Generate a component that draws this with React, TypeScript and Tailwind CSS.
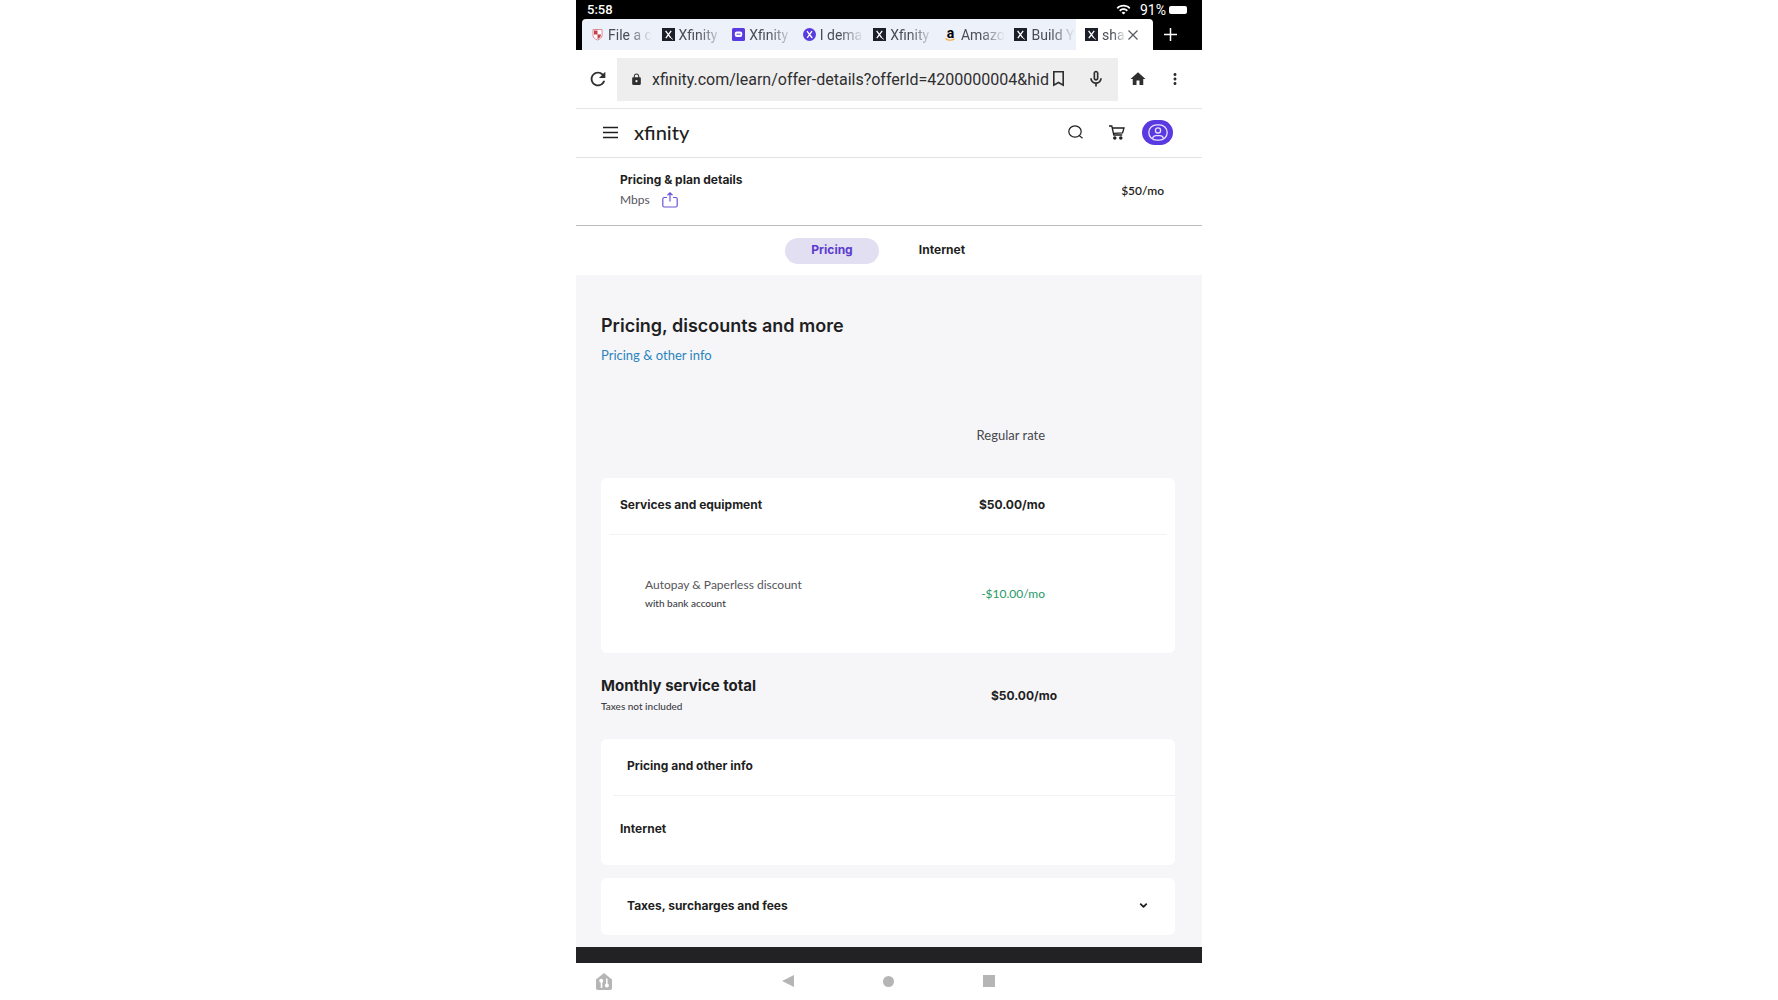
import { useState } from 'react';
import type { ReactNode } from 'react';
import { MdHome, MdLock, MdMoreVert, MdOutlineMicNone, MdRefresh, MdWifi } from 'react-icons/md';
import { ChevronDown } from 'lucide-react';

function XIcon() {
  return (
    <svg viewBox="0 0 13 13" className="size-[13px] shrink-0">
      <rect width="13" height="13" fill="#1c1f2a" />
      <path d="M3.600 2.800 8.800 9.800M9.200 2.800 3.800 10.200" stroke="#fff" strokeWidth="1.300" fill="none" />
      <path d="M8.800 9.800 10.800 11.400" stroke="#fff" strokeWidth=".9" />
    </svg>
  );
}

function ShieldIcon() {
  return (
    <svg viewBox="0 0 13 13" className="size-[13px] shrink-0">
      <path d="M2 1.500h9v6c0 2.200-2 3.500-4.500 4.500C4 11 2 9.700 2 7.500z" fill="#fff" stroke="#d98a92" />
      <path d="M3 2.500h3.500v4H3zM6.500 6.500h3.500c0 2.300-1.300 3.500-3.500 4.400z" fill="#c2404c" />
    </svg>
  );
}

function ChatIcon() {
  return (
    <svg viewBox="0 0 13 13" className="size-[13px] shrink-0">
      <rect width="13" height="13" rx="1.500" fill="#5a3be0" />
      <rect x="2.800" y="3.500" width="7.400" height="5.500" rx="2" fill="#fff" />
      <path d="M4.500 6.200h4" stroke="#5a3be0" />
    </svg>
  );
}

function RoundXIcon() {
  return (
    <svg viewBox="0 0 13 13" className="size-[13px] shrink-0">
      <circle cx="6.500" cy="6.500" r="6.500" fill="#5a3be0" />
      <path d="M4 3.200 9.200 10M9 3.200 4.200 9.800" stroke="#fff" strokeWidth="1.300" />
    </svg>
  );
}

function AmazonIcon() {
  return (
    <span className="flex size-[13px] shrink-0 flex-col items-center justify-center">
      <span className="text-sm leading-[9px] font-bold text-black">a</span>
      <svg viewBox="0 0 10 3" className="h-[3px] w-[10px]">
        <path d="M.5.5C3 2.800 7 2.800 9.500.8" stroke="#f4a938" strokeWidth="1.200" fill="none" />
      </svg>
    </span>
  );
}

const browserTabs: { title: string; icon: ReactNode }[] = [
  { title: 'File a c', icon: <ShieldIcon /> },
  { title: 'Xfinity', icon: <XIcon /> },
  { title: 'Xfinity', icon: <ChatIcon /> },
  { title: 'I dema', icon: <RoundXIcon /> },
  { title: 'Xfinity', icon: <XIcon /> },
  { title: 'Amazo', icon: <AmazonIcon /> },
  { title: 'Build Y', icon: <XIcon /> },
];

const fade = 'overflow-hidden whitespace-nowrap [mask-image:linear-gradient(to_right,black_45%,transparent)]';

function BrowserChrome() {
  return (
    <div className="font-[Roboto,sans-serif]">
      {/* Status bar */}
      <div className="flex h-[19px] items-center bg-black pr-[15px] pl-[11px] text-[13px] leading-4 text-white">
        <span className="flex-1 font-medium">5:58</span>
        <MdWifi className="mr-[9px] size-[15px]" />
        <span className="text-sm leading-4">91%</span>
        <span className="ml-[3px] h-2 w-[18px] rounded-xs bg-white" />
      </div>

      {/* Tab strip */}
      <div className="flex h-[31px] bg-black pl-[6px] text-sm text-[#4a4d55]">
        <div className="flex min-w-0 flex-1 rounded-tl-sm bg-[#edf1fa]">
          {browserTabs.map((tab, i) => (
            <button key={i} className="flex min-w-0 flex-1 items-center gap-1 pl-[9px]">
              {tab.icon}
              <span className={`w-[44px] text-left ${fade}`}>{tab.title}</span>
            </button>
          ))}
        </div>
        <div className="flex w-[77px] items-center rounded-tr-sm bg-white pl-[9px]">
          <XIcon />
          <span className={`ml-1 w-[24px] ${fade}`}>sha</span>
          <button aria-label="Close tab" className="ml-[2px]">
            <svg viewBox="0 0 10 10" className="size-[10px]" stroke="#55585f" strokeWidth="1.200">
              <path d="M.5.5l9 9M9.500.5l-9 9" />
            </svg>
          </button>
        </div>
        <button aria-label="New tab" className="flex w-[49px] items-center pl-[11px]">
          <svg viewBox="0 0 13 13" className="size-[13px]" stroke="#fff" strokeWidth="1.500">
            <path d="M6.500 0v13M0 6.500h13" />
          </svg>
        </button>
      </div>

      {/* Address bar */}
      <div className="flex h-[59px] items-center border-b border-[#e6e6e8] bg-white pr-[10px] text-[#2f2f31]">
        <button aria-label="Reload" className="flex w-[41px] justify-center pl-[2px]">
          <MdRefresh className="size-[22px]" />
        </button>
        <div className="flex h-[43px] min-w-0 flex-1 items-center bg-[#eeeeee] pr-3 pl-[13px]">
          <MdLock className="size-[13px] shrink-0" />
          <input
            type="text"
            aria-label="Address"
            readOnly
            value="xfinity.com/learn/offer-details?offerId=4200000004&hid"
            className="ml-[9px] min-w-0 flex-1 bg-transparent pt-[2px] text-base outline-none"
          />
          <button aria-label="Bookmark">
            <svg viewBox="0 0 11 16" className="h-4 w-[11px]" fill="none" stroke="currentColor" strokeWidth="1.600">
              <path d="M.8.800h9.400v13.400L5.500 11.500.8 14.200z" />
            </svg>
          </button>
          <button aria-label="Voice search" className="ml-[22px]"><MdOutlineMicNone className="size-5" /></button>
        </div>
        <button aria-label="Home page" className="flex w-[40px] justify-center"><MdHome className="size-[18px]" /></button>
        <button aria-label="More" className="flex w-[34px] justify-center"><MdMoreVert className="size-[18px]" /></button>
      </div>
    </div>
  );
}

function SiteHeader() {
  return (
    <header className="flex h-[49px] items-center border-b border-[#e2e2e4] bg-white pr-[29px] pb-[2px] pl-[27px] text-[#1f1f23]">
      <button aria-label="Menu">
        <svg viewBox="0 0 15 13" className="h-[13px] w-[15px]" stroke="currentColor" strokeWidth="1.300">
          <path d="M0 1.500h15M0 6.500h15M0 11.500h15" />
        </svg>
      </button>
      <a href="#" className="ml-4 flex-1 text-xl leading-6 font-medium">xfinity</a>
      <button aria-label="Search">
        <svg viewBox="0 0 15 14" className="h-[14px] w-[15px]" fill="none" stroke="currentColor" strokeWidth="1.200">
          <ellipse cx="7" cy="6.500" rx="6.200" ry="5.700" />
          <path d="m11.300 10.600 3.200 2.600" />
        </svg>
      </button>
      <button aria-label="Cart" className="ml-[26px]">
        <svg viewBox="0 0 16 15" className="h-[15px] w-[16px]" fill="none" stroke="currentColor" strokeWidth="1.300">
          <path d="M0 1h2.800l2 9h8.400M3.400 3H15l-1.400 4.800L4.400 8.400" />
          <circle cx="5.800" cy="13" r="1.100" fill="currentColor" />
          <circle cx="11.800" cy="13" r="1.100" fill="currentColor" />
        </svg>
      </button>
      <button aria-label="Account" className="ml-[17px] flex h-[25px] w-[31px] items-center justify-center rounded-full bg-[#5a39e0]">
        <svg viewBox="0 0 20 17" className="h-[17px] w-[20px]" fill="none" stroke="#e9e2ff" strokeWidth="1.300">
          <rect x=".8" y=".8" width="18.400" height="15.400" rx="8" />
          <circle cx="10" cy="6.400" r="2.600" />
          <path d="M4.600 14.200c.6-2 2-2.600 3.600-2.600h3.600c1.600 0 3 .6 3.600 2.600" />
        </svg>
      </button>
    </header>
  );
}

function PlanBar() {
  return (
    <section className="flex h-[68px] items-center justify-between border-b border-[#bcbcbf] bg-white pr-[38px] pl-[44px]">
      <div className="pb-1">
        <h2 className="font-[Inter,sans-serif] text-xs leading-5 font-bold">Pricing &amp; plan details</h2>
        <div className="flex h-5 items-center gap-3 text-xs">
          <span className="text-[#55555c]">Mbps</span>
          <button aria-label="Share">
            <svg viewBox="0 0 16 16" className="size-4" fill="none" stroke="#6a52dc" strokeWidth="1.200">
              <path d="M5 5.500H2.200C1.200 5.500.8 6 .8 7v6.500c0 1 .4 1.500 1.400 1.500h11.600c1 0 1.400-.5 1.400-1.500V7c0-1-.4-1.500-1.400-1.500H11M8 9.500V1M5.500 3.200 8 .8l2.500 2.400" />
            </svg>
          </button>
        </div>
      </div>
      <span className="pb-[2px] text-xs font-semibold">$50/mo</span>
    </section>
  );
}

function PricingTable() {
  return (
    <table className="mt-[43px] w-full border-separate border-spacing-0 text-left">
      <thead>
        <tr className="h-[68px] align-middle">
          <td />
          <th scope="col" className="pb-4 text-right text-[13px] font-normal text-[#46464c]">Regular rate</th>
          <td className="w-[130px]" />
        </tr>
      </thead>
      <tbody>
        <tr className="h-[57px] font-[Inter,sans-serif] text-xs font-bold">
          <th scope="row" className="rounded-tl-md bg-white p-0 pl-2">
            <div className="h-[57px] border-b border-[#f2f2f4] pt-[19px] pl-[11px]">Services and equipment</div>
          </th>
          <td className="bg-white p-0">
            <div className="h-[57px] border-b border-[#f2f2f4] pt-[19px] text-right">$50.00/mo</div>
          </td>
          <td className="rounded-tr-md bg-white p-0 pr-2">
            <div className="h-[57px] border-b border-[#f2f2f4]" />
          </td>
        </tr>
        <tr className="h-[118px]">
          <th scope="row" className="rounded-bl-md bg-white p-0 pl-[44px] font-normal">
            <div className="text-xs leading-[18px] text-[#55555c]">Autopay &amp; Paperless discount</div>
            <div className="text-[10px] leading-[18px] font-medium text-[#3c3c42]">with bank account</div>
          </th>
          <td className="bg-white p-0 text-right text-xs text-[#1f9a66]">-$10.00/mo</td>
          <td className="rounded-br-md bg-white p-0" />
        </tr>
      </tbody>
      <tfoot>
        <tr className="h-[86px]">
          <th scope="row" className="p-0">
            <div className="font-[Inter,sans-serif] text-[15px] leading-5 font-bold">Monthly service total</div>
            <div className="text-[10px] leading-5 font-medium text-[#3c3c42]">Taxes not included</div>
          </th>
          <td colSpan={2} className="p-0 pr-[118px] text-right font-[Inter,sans-serif] text-xs font-bold">$50.00/mo</td>
        </tr>
      </tfoot>
    </table>
  );
}

export default function App() {
  const [tab, setTab] = useState('Pricing');

  return (
    <div className="min-h-screen bg-white">
      <div className="mx-auto max-w-[626px] font-[Lato,sans-serif] text-[#1f1f23]">
        <BrowserChrome />
        <SiteHeader />
        <PlanBar />

        <nav className="flex h-[49px] items-center justify-center gap-4 bg-white pr-1">
          {['Pricing', 'Internet'].map(name => (
            <button
              key={name}
              onClick={() => setTab(name)}
              className={`h-[26px] w-[94px] rounded-full pb-[2px] font-[Inter,sans-serif] text-xs font-bold ${
                tab === name ? 'bg-[#e3dff3] text-[#5a3bd0]' : ''
              }`}
            >
              {name}
            </button>
          ))}
        </nav>

        <main className="bg-[#f6f6f9] pt-[37px] pr-[27px] pb-3 pl-[25px]">
          <h1 className="font-[Inter,sans-serif] text-lg leading-7 font-semibold">Pricing, discounts and more</h1>
          <a href="#pricing-info" className="mt-[3px] block text-[13px] leading-6 text-[#2b84bd]">Pricing &amp; other info</a>

          <PricingTable />

          <section id="pricing-info" className="h-[126px] rounded-md bg-white font-[Inter,sans-serif] text-xs font-bold">
            <h3 className="ml-3 h-[57px] border-b border-[#f2f2f4] pt-[19px] pl-[14px]">Pricing and other info</h3>
            <h4 className="pt-[25px] pl-[19px]">Internet</h4>
          </section>

          <button className="mt-[13px] flex h-[57px] w-full items-center justify-between rounded-md bg-white pr-[26px] pb-[2px] pl-[26px] font-[Inter,sans-serif] text-xs font-bold">
            Taxes, surcharges and fees
            <ChevronDown className="size-[11px]" strokeWidth={4} />
          </button>
        </main>

        <div className="h-4 bg-[#222225]" />

        {/* System navigation */}
        <div className="grid h-[36px] grid-cols-[1fr_auto_1fr] items-center bg-white pr-[22px] pl-5 text-[#b5b5b5]">
          <button aria-label="Smart home" className="w-4">
            <svg viewBox="0 0 16 17" className="h-[17px] w-4">
              <path d="M8 0 16 6.500V15c0 1.300-.7 2-2 2H2c-1.300 0-2-.7-2-2V6.500z" fill="currentColor" />
              <path d="M5.500 15V8.500M10.800 5.500v6" stroke="#fff" strokeWidth="1.500" />
              <circle cx="5.200" cy="7.800" r="2" fill="#fff" />
              <circle cx="10.900" cy="12.500" r="2" fill="#fff" />
            </svg>
          </button>
          <div className="flex items-center gap-[89px]">
            <button aria-label="Back">
              <svg viewBox="0 0 12 12" className="size-3"><path d="M12 0v12L0 6z" fill="currentColor" /></svg>
            </button>
            <button aria-label="Home" className="size-[11px] rounded-full bg-[#b5b5b5]" />
            <button aria-label="Recent apps" className="size-3 bg-[#b5b5b5]" />
          </div>
        </div>
      </div>
    </div>
  );
}
